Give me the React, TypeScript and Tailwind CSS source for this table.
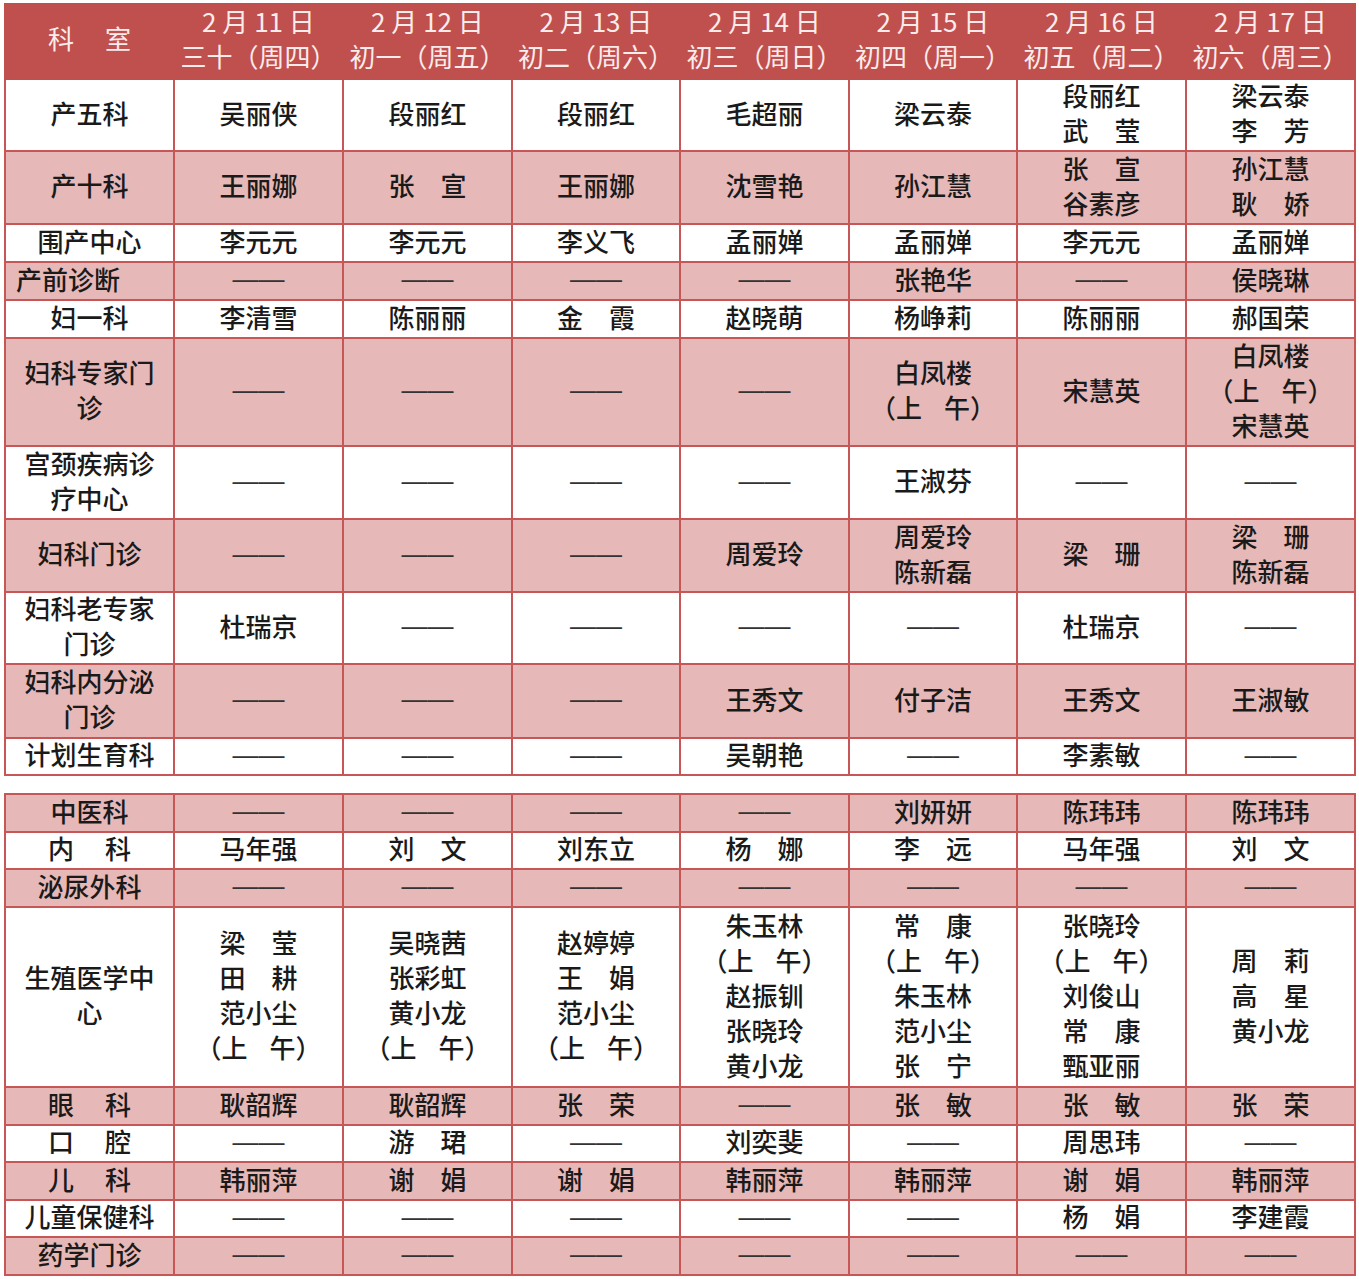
import React from "react";

const D = "——";
const AM = "AM";

type Row = { dept: string; h: number; pink: boolean; cells: string[][]; left?: boolean };

const t1: Row[] = [
  { dept: "产五科", h: 72, pink: false, cells: [["吴丽侠"], ["段丽红"], ["段丽红"], ["毛超丽"], ["梁云泰"], ["段丽红", "武　莹"], ["梁云泰", "李　芳"]] },
  { dept: "产十科", h: 73, pink: true, cells: [["王丽娜"], ["张　宣"], ["王丽娜"], ["沈雪艳"], ["孙江慧"], ["张　宣", "谷素彦"], ["孙江慧", "耿　娇"]] },
  { dept: "围产中心", h: 38, pink: false, cells: [["李元元"], ["李元元"], ["李义飞"], ["孟丽婵"], ["孟丽婵"], ["李元元"], ["孟丽婵"]] },
  { dept: "产前诊断", h: 38, pink: true, left: true, cells: [[D], [D], [D], [D], ["张艳华"], [D], ["侯晓琳"]] },
  { dept: "妇一科", h: 38, pink: false, cells: [["李清雪"], ["陈丽丽"], ["金　霞"], ["赵晓萌"], ["杨峥莉"], ["陈丽丽"], ["郝国荣"]] },
  { dept: "妇科专家门\n诊", h: 108, pink: true, cells: [[D], [D], [D], [D], ["白凤楼", AM], ["宋慧英"], ["白凤楼", AM, "宋慧英"]] },
  { dept: "宫颈疾病诊\n疗中心", h: 73, pink: false, cells: [[D], [D], [D], [D], ["王淑芬"], [D], [D]] },
  { dept: "妇科门诊", h: 73, pink: true, cells: [[D], [D], [D], ["周爱玲"], ["周爱玲", "陈新磊"], ["梁　珊"], ["梁　珊", "陈新磊"]] },
  { dept: "妇科老专家\n门诊", h: 72, pink: false, cells: [["杜瑞京"], [D], [D], [D], [D], ["杜瑞京"], [D]] },
  { dept: "妇科内分泌\n门诊", h: 74, pink: true, cells: [[D], [D], [D], ["王秀文"], ["付子洁"], ["王秀文"], ["王淑敏"]] },
  { dept: "计划生育科", h: 37, pink: false, cells: [[D], [D], [D], ["吴朝艳"], [D], ["李素敏"], [D]] },
];

const t2: Row[] = [
  { dept: "中医科", h: 38, pink: true, cells: [[D], [D], [D], [D], ["刘妍妍"], ["陈玮玮"], ["陈玮玮"]] },
  { dept: "内\u3000\u2009科", h: 37, pink: false, cells: [["马年强"], ["刘　文"], ["刘东立"], ["杨　娜"], ["李　远"], ["马年强"], ["刘　文"]] },
  { dept: "泌尿外科", h: 38, pink: true, cells: [[D], [D], [D], [D], [D], [D], [D]] },
  {
    dept: "生殖医学中\n心", h: 180, pink: false, cells: [
      ["梁　莹", "田　耕", "范小尘", AM],
      ["吴晓茜", "张彩虹", "黄小龙", AM],
      ["赵婷婷", "王　娟", "范小尘", AM],
      ["朱玉林", AM, "赵振钏", "张晓玲", "黄小龙"],
      ["常　康", AM, "朱玉林", "范小尘", "张　宁"],
      ["张晓玲", AM, "刘俊山", "常　康", "甄亚丽"],
      ["周　莉", "高　星", "黄小龙"],
    ]
  },
  { dept: "眼\u3000\u2009科", h: 38, pink: true, cells: [["耿韶辉"], ["耿韶辉"], ["张　荣"], [D], ["张　敏"], ["张　敏"], ["张　荣"]] },
  { dept: "口\u3000\u2009腔", h: 37, pink: false, cells: [[D], ["游　珺"], [D], ["刘奕斐"], [D], ["周思玮"], [D]] },
  { dept: "儿\u3000\u2009科", h: 38, pink: true, cells: [["韩丽萍"], ["谢　娟"], ["谢　娟"], ["韩丽萍"], ["韩丽萍"], ["谢　娟"], ["韩丽萍"]] },
  { dept: "儿童保健科", h: 37, pink: false, cells: [[D], [D], [D], [D], [D], ["杨　娟"], ["李建霞"]] },
  { dept: "药学门诊", h: 38, pink: true, cells: [[D], [D], [D], [D], [D], [D], [D]] },
];

const widths = [169, 169, 169, 168, 169, 168, 169, 169];

const header = [
  ["2 月 11 日", "三十（周四）"],
  ["2 月 12 日", "初一（周五）"],
  ["2 月 13 日", "初二（周六）"],
  ["2 月 14 日", "初三（周日）"],
  ["2 月 15 日", "初四（周一）"],
  ["2 月 16 日", "初五（周二）"],
  ["2 月 17 日", "初六（周三）"],
];

function Cols() {
  return (
    <colgroup>
      {widths.map((w, i) => (
        <col key={i} style={{ width: w }} />
      ))}
    </colgroup>
  );
}

function Line({ t }: { t: string }) {
  if (t === D) {
    return (
      <div>
        <span className="text-[#333]" style={{ fontFamily: '"Liberation Sans", sans-serif' }}>
          ——
        </span>
      </div>
    );
  }
  if (t === AM) {
    return (
      <div>
        （上<span className="inline-block w-[22px]" />午）
      </div>
    );
  }
  return <div>{t}</div>;
}

function Body({ rows }: { rows: Row[] }) {
  return (
    <tbody>
      {rows.map((r, i) => (
        <tr key={i} className={r.pink ? "bg-[#e6b8b7]" : "bg-white"} style={{ height: r.h }}>
          <td className={`border-2 border-[#c75656] p-0 leading-[35px] ${r.left ? "text-left pl-[10px]" : "text-center"}`}>
            <div className="-mt-[6px] whitespace-pre-line">{r.dept}</div>
          </td>
          {r.cells.map((c, j) => (
            <td key={j} className="border-2 border-[#c75656] p-0 text-center leading-[35px]">
              <div className="-mt-[6px]">
                {c.map((l, k) => (
                  <Line key={k} t={l} />
                ))}
              </div>
            </td>
          ))}
        </tr>
      ))}
    </tbody>
  );
}

export default function App() {
  return (
    <div
      className="w-[1359px] h-[1279px] bg-white pt-[3px] pl-[4px] text-[26px] font-medium text-[#1a1a1a]"
      style={{ fontFamily: '"Noto Sans CJK SC", "Noto Sans", sans-serif' }}
    >
      <table className="border-collapse table-fixed w-[1350px]">
        <Cols />
        <thead>
          <tr className="bg-[#c0504d] text-[#fbecec]" style={{ height: 75 }}>
            <th className="font-normal p-0 text-center leading-[35px] border-2 border-[#c0504d]">
              <div className="-mt-[8px]">科&#x3000;&#x2009;室</div>
            </th>
            {header.map((h, i) => (
              <th key={i} className="font-normal p-0 text-center leading-[35px] border-2 border-[#c0504d]">
                <div className="-mt-[8px]">
                  <div>{h[0]}</div>
                  <div>{h[1]}</div>
                </div>
              </th>
            ))}
          </tr>
        </thead>
        <Body rows={t1} />
      </table>
      <div className="h-[17px]" />
      <table className="border-collapse table-fixed w-[1350px]">
        <Cols />
        <Body rows={t2} />
      </table>
    </div>
  );
}
